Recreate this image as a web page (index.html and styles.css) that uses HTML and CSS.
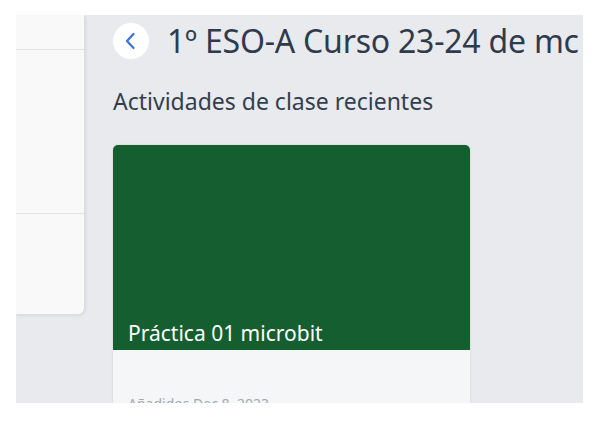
FILE: index.html
```html
<!DOCTYPE html>
<html lang="es">
<head>
<meta charset="utf-8">
<title>1º ESO-A Curso 23-24</title>
<link rel="stylesheet" href="styles.css">
</head>
<body>
<div class="frame">
  <aside class="sidebar">
    <div class="side-row side-top"></div>
    <div class="side-row side-mid"></div>
    <div class="side-row side-bottom"></div>
  </aside>
  <main class="main">
    <header class="title-row">
      <button class="back" type="button" aria-label="Volver">
        <svg width="36" height="36" viewBox="0 0 36 36" aria-hidden="true"><path d="M20.5 11 L14 18 L20.5 25" fill="none" stroke="#3a72d8" stroke-width="2.2" stroke-linecap="round" stroke-linejoin="round"/></svg>
      </button>
      <h1 class="title">1º ESO-A Curso 23-24 de mc</h1>
    </header>
    <h2 class="subtitle">Actividades de clase recientes</h2>
    <article class="card">
      <div class="card-cover"><span class="card-name">Práctica 01 microbit</span></div>
      <div class="card-body"><span class="card-meta">Añadidos Dec 8, 2023</span></div>
    </article>
  </main>
</div>
</body>
</html>
```

FILE: styles.css
```css
* { box-sizing: border-box; }
html, body { margin: 0; padding: 0; background: #ffffff; }
body {
  padding: 15px 17px 18px 16px;
  font-family: "Noto Sans", "Open Sans", sans-serif;
}
.frame {
  width: 567px;
  height: 388px;
  overflow: hidden;
  background: #e9eaed;
  display: flex;
  align-items: flex-start;
}
.sidebar {
  width: 68px;
  height: 299px;
  flex: none;
  background: #f9f9f9;
  border-bottom-right-radius: 6px;
  box-shadow: 1px 1px 4px rgba(0,0,0,0.10);
  display: flex;
  flex-direction: column;
}
.side-row { border-bottom: 1px solid #e3e3e5; }
.side-top { height: 35px; }
.side-mid { height: 164px; }
.side-bottom { border-bottom: none; flex: 1; }
.main {
  flex: 1;
  min-width: 0;
  padding: 8px 0 0 29px;
}
.title-row {
  display: flex;
  align-items: center;
  gap: 18px;
  height: 36px;
}
.back {
  width: 36px;
  height: 36px;
  border-radius: 50%;
  border: none;
  background: #ffffff;
  padding: 0;
  flex: none;
  display: flex;
  align-items: center;
  justify-content: center;
}
.title {
  margin: 0;
  font-weight: 400;
  font-size: 32px;
  line-height: 36px;
  color: #2f3b4c;
  white-space: nowrap;
  letter-spacing: -0.22px;
}
.subtitle {
  margin: 27px 0 0;
  font-weight: 400;
  font-size: 23px;
  line-height: 30px;
  color: #333f4f;
}
.card {
  margin-top: 29px;
  width: 357px;
  border-radius: 5px 5px 0 0;
  overflow: hidden;
  box-shadow: 0 0 2px rgba(0,0,0,0.15);
}
.card-cover {
  height: 205px;
  background: #155e30;
  display: flex;
  align-items: flex-end;
  padding: 0 15px 3px;
}
.card-name {
  color: #ffffff;
  font-size: 21px;
  line-height: 28px;
}
.card-body {
  height: 120px;
  background: #f5f6f8;
  padding: 42px 15px 0;
}
.card-meta {
  color: #a3a8b0;
  font-size: 14px;
  line-height: 18px;
}
```
